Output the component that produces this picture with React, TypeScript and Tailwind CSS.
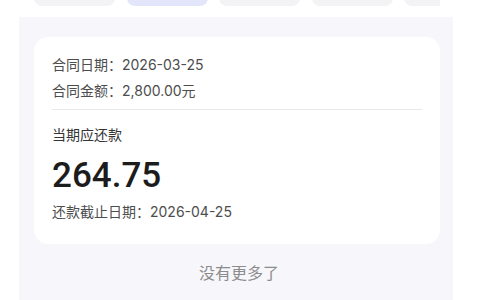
import React from "react";

export default function App() {
  const chips = [false, true, false, false, false];
  return (
    <div
      className="w-[480px] h-[300px] bg-white overflow-hidden"
      style={{ fontFamily: 'Inter, "Noto Sans CJK SC", sans-serif' }}
    >
      <div className="ml-[34px] w-[406px] h-[6px] overflow-hidden">
        <div className="flex gap-[11.5px] -mt-[26px]">
          {chips.map((active, i) => (
            <div
              key={i}
              className={`shrink-0 w-[81px] h-[32px] rounded-[8px] ${
                active ? "bg-[#e3e6fb]" : "bg-[#f3f3f5]"
              }`}
            />
          ))}
        </div>
      </div>
      <div className="ml-[19px] w-[434px] mt-[11px] h-[300px] bg-[#f6f6fb] pl-[15px] pr-[13px] pt-[20px]">
        <div className="bg-white rounded-[14px] px-[18px] pt-[18px] pb-[22px]">
          <div className="text-[14px] leading-[20px] text-[#4d4d4d]">合同日期：2026-03-25</div>
          <div className="mt-[6px] text-[14px] leading-[20px] text-[#4d4d4d]">合同金额：2,800.00元</div>
          <div className="mt-[8px] h-px bg-[#e8e8ea]" />
          <div className="mt-[15px] text-[14px] leading-[20px] text-[#333333]">当期应还款</div>
          <div
            className="mt-[11px] text-[35px] leading-[40px] font-medium text-[#1c1c1c]"
            style={{ fontFamily: "Roboto, sans-serif" }}
          >
            264.75
          </div>
          <div className="mt-[6px] text-[14px] leading-[20px] text-[#4d4d4d]">还款截止日期：2026-04-25</div>
        </div>
        <div className="mt-[18px] text-center text-[16px] leading-[22px] text-[#8c8c8c] pl-[4px]">
          没有更多了
        </div>
      </div>
    </div>
  );
}
